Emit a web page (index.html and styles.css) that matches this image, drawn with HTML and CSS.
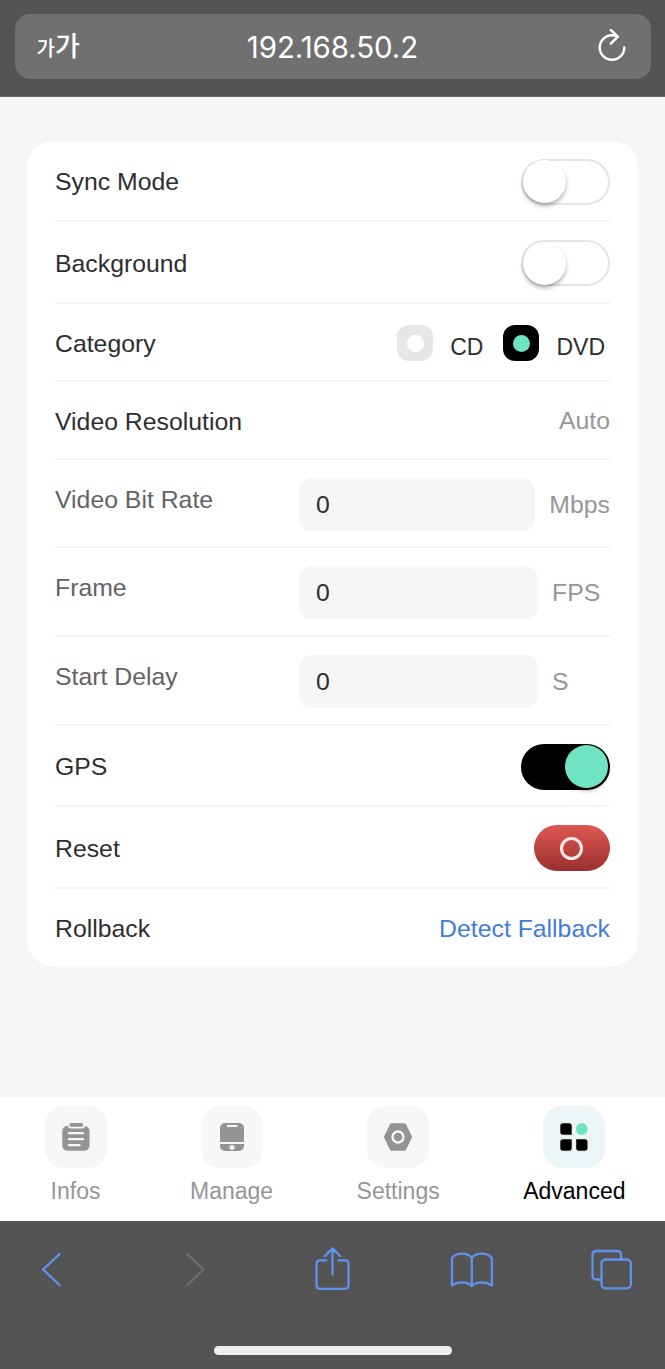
FILE: index.html
```html
<!DOCTYPE html>
<html lang="en">
  <head>
    <meta charset="UTF-8" />
    <meta name="viewport" content="width=device-width, initial-scale=1.0" />
    <title>Advanced</title>
    <link rel="stylesheet" href="styles.css">
  </head>
  <body>
    <header class="browser-top">
      <div class="address-bar">
        <div class="text-size"><span class="small">가</span><span class="large">가</span></div>
        <div class="address">192.168.50.2</div>
        <svg class="reload" width="32" height="36" viewBox="0 0 32 36">
          <path d="M27.3 18.500A12.300 12.300 0 1 1 15 6.200Q18 6.200 20.500 7.200M13.800 1L20.900 7.600L13.800 14.600" />
        </svg>
      </div>
    </header>

    <main class="content">
      <div class="card">
        <div class="row">
          <span class="label">Sync Mode</span>
          <div class="switch"><div class="knob"></div></div>
        </div>
        <div class="row row-bg">
          <span class="label">Background</span>
          <div class="switch"><div class="knob"></div></div>
        </div>
        <div class="row row-text">
          <span class="label">Category</span>
          <div class="radio-group">
            <div class="radio"></div>
            <span class="radio-label">CD</span>
            <div class="radio checked"></div>
            <span class="radio-label">DVD</span>
          </div>
        </div>
        <div class="row row-text">
          <span class="label">Video Resolution</span>
          <span class="value">Auto</span>
        </div>
        <div class="row row-input row-first">
          <span class="label disabled">Video Bit Rate</span>
          <div class="field">
            <div class="input">0</div>
            <span class="unit">Mbps</span>
          </div>
        </div>
        <div class="row row-input">
          <span class="label disabled">Frame</span>
          <div class="field">
            <div class="input">0</div>
            <span class="unit">FPS</span>
          </div>
        </div>
        <div class="row row-input">
          <span class="label disabled">Start Delay</span>
          <div class="field">
            <div class="input">0</div>
            <span class="unit">S</span>
          </div>
        </div>
        <div class="row">
          <span class="label">GPS</span>
          <div class="switch on"><div class="knob"></div></div>
        </div>
        <div class="row row-bg">
          <span class="label">Reset</span>
          <div class="btn-reset"><div class="ring"></div></div>
        </div>
        <div class="row row-last">
          <span class="label">Rollback</span>
          <a class="link">Detect Fallback</a>
        </div>
      </div>
    </main>

    <nav class="tabs">
      <div class="tab">
        <div class="tab-icon">
          <svg width="32" height="32" viewBox="0 0 32 32">
            <rect x="2.3" y="5" width="27.2" height="24.8" rx="5" fill="#949497" />
            <rect x="8" y="0" width="17" height="7.4" rx="3" fill="#f7f7f7" />
            <rect x="9.4" y="2" width="13.6" height="3.7" rx="1.5" fill="#949497" />
            <path d="M9 12.2h14M9 18.2h14M9 24.2h10.500" fill="none" stroke="#f7f7f7" stroke-width="2.3" stroke-linecap="round" />
          </svg>
        </div>
        <span>Infos</span>
      </div>
      <div class="tab">
        <div class="tab-icon">
          <svg width="32" height="32" viewBox="0 0 32 32">
            <rect x="4" y="2" width="24" height="28" rx="5" fill="#949497" />
            <path d="M11 5h10.500M4 22h24" fill="none" stroke="#f7f7f7" stroke-width="2" />
            <circle cx="16" cy="26.500" r="2.500" fill="#f7f7f7" />
          </svg>
        </div>
        <span>Manage</span>
      </div>
      <div class="tab">
        <div class="tab-icon">
          <svg width="32" height="32" viewBox="0 0 32 32">
            <path d="M9.500 4h13L28.300 16L22.500 28h-13L3.700 16z" fill="#949497" stroke="#949497" stroke-width="3.400" stroke-linejoin="round" />
            <circle cx="16" cy="16" r="5.500" fill="none" stroke="#f7f7f7" stroke-width="2.300" />
          </svg>
        </div>
        <span>Settings</span>
      </div>
      <div class="tab active">
        <div class="tab-icon">
          <svg width="32" height="32" viewBox="0 0 32 32">
            <path d="M5 2.300h6a2.700 2.700 0 0 1 2.700 2.700v8.700H5A2.700 2.700 0 0 1 2.300 11V5A2.700 2.700 0 0 1 5 2.300z" />
            <path d="M5 18.300h8.700V27a2.700 2.700 0 0 1-2.700 2.700H5A2.700 2.700 0 0 1 2.300 27v-6A2.700 2.700 0 0 1 5 18.300z" />
            <path d="M18.200 18.300h8.600a2.700 2.700 0 0 1 2.700 2.700v6a2.700 2.700 0 0 1-2.700 2.700h-5.900a2.700 2.700 0 0 1-2.700-2.700z" />
            <circle cx="23.800" cy="8" r="5.900" fill="#6fe3c2" />
          </svg>
        </div>
        <span>Advanced</span>
      </div>
    </nav>

    <footer class="browser-bottom">
      <div class="toolbar">
        <svg viewBox="0 0 48 48"><path d="M32.500 10.200L16 25.500L32.500 41" /></svg>
        <svg class="muted" viewBox="0 0 48 48"><path d="M20.500 10.200L36.500 25.500L20.500 41" /></svg>
        <svg viewBox="0 0 48 48"><path d="M19.500 16.300H13Q9.500 16.300 9.500 19.800V41.300Q9.500 44.800 13 44.800H38Q41.500 44.800 41.500 41.300V19.800Q41.500 16.300 38 16.300H31.500M25.500 30.500V5M17.700 12.200L25.500 4.400L33.300 12.200" /></svg>
        <svg viewBox="0 0 48 48"><path d="M24.800 14Q22 9.700 14.800 9.700Q8 9.700 5 14V41.500Q9 38.300 14.800 38.300Q21 38.300 24.800 42Q28.500 38.300 34.800 38.300Q40.500 38.300 44.800 41.500V14Q41.500 9.700 34.800 9.700Q27.800 9.700 24.800 14zV42" /></svg>
        <svg viewBox="0 0 48 48"><path d="M14 35.500H9.500Q5.500 35.500 5.500 31.500V11Q5.500 7 9.500 7H30Q34 7 34 11V15.500" /><rect x="14.500" y="15.500" width="29.300" height="28.800" rx="4" /></svg>
      </div>
      <div class="home-indicator"></div>
    </footer>
  </body>
</html>
```
FILE: styles.css
```css
* {
  box-sizing: border-box;
}
body {
  margin: 0;
  height: 1369px;
  display: flex;
  flex-direction: column;
  font-family: "Liberation Sans", Arial, sans-serif;
  font-size: 24.8px;
  line-height: 28px;
  color: #2e2e2f;
  background-color: #f6f6f6;
}
.browser-top {
  height: 97px;
  padding: 14px 14.5px 0;
  background-color: #545454;
  border-bottom: 1px solid #6c6c6c;
}
.address-bar {
  height: 65px;
  padding: 0 22px;
  display: grid;
  grid-template-columns: 60px 1fr 60px;
  align-items: center;
  border-radius: 15px;
  background-color: #707070;
  color: white;
}
.text-size {
  display: flex;
  align-items: baseline;
  font-family: "Noto Sans CJK KR", sans-serif;
  font-weight: 500;
}
.text-size .small {
  font-size: 20px;
}
.text-size .large {
  font-size: 27px;
}
.address {
  text-align: center;
  font-family: Inter, sans-serif;
  font-size: 29.5px;
  letter-spacing: -0.1px;
}
.reload {
  justify-self: end;
  fill: none;
  stroke: white;
  stroke-width: 2.4;
  stroke-linecap: round;
  stroke-linejoin: round;
}
.content {
  flex: 1;
  padding: 44px 27px 0;
}
.card {
  padding: 0 28px;
  border-radius: 26px;
  background-color: white;
}
.row {
  height: 81px;
  padding-top: 2px;
  display: flex;
  justify-content: space-between;
  align-items: center;
  border-bottom: 2px solid #f4f4f4;
}
.row-bg {
  height: 82px;
}
.row-text {
  height: 78px;
}
.row-input {
  height: 89px;
  padding-top: 18px;
  align-items: flex-start;
}
.row-first {
  height: 88px;
}
.row-last {
  height: 77px;
  border-bottom: none;
}
.label {
  padding-top: 1px;
}
.row-input .label {
  padding-top: 8px;
}
.disabled {
  color: #636365;
}
.value,
.unit {
  color: #969698;
}
.link {
  color: #437bdb;
}
.switch {
  width: 89px;
  height: 46px;
  display: flex;
  align-items: center;
  border: 2px solid #e5e5e5;
  border-radius: 23px;
  background-color: white;
}
.knob {
  flex: none;
  width: 43px;
  height: 43px;
  border-radius: 50%;
  background-color: white;
  box-shadow: 0 3px 4px rgba(0, 0, 0, 0.3);
}
.switch.on {
  justify-content: flex-end;
  border-color: black;
  background-color: black;
}
.on .knob {
  background-color: #6fe3c2;
}
.radio-group {
  display: flex;
  align-items: center;
  padding-right: 5px;
}
.radio {
  width: 36px;
  height: 36px;
  margin-right: 17px;
  display: flex;
  align-items: center;
  justify-content: center;
  border-radius: 12px;
  background-color: #e7e7e8;
}
.radio::after {
  content: "";
  width: 17px;
  height: 17px;
  border-radius: 50%;
  background-color: white;
}
.radio.checked {
  margin-left: 20px;
  background-color: black;
}
.radio.checked::after {
  background-color: #6fe3c2;
}
.radio-label {
  padding-top: 8px;
  font-size: 23px;
}
.field {
  width: 311px;
  display: flex;
  align-items: center;
  gap: 14px;
}
.input {
  flex: 1;
  height: 53px;
  padding: 0 17px;
  line-height: 54px;
  border-radius: 13px;
  background-color: #f6f6f6;
}
.unit {
  min-width: 58px;
}
.btn-reset {
  width: 76px;
  height: 46px;
  display: flex;
  align-items: center;
  justify-content: center;
  border-radius: 23px;
  background: linear-gradient(#de5753, #98302d);
}
.ring {
  width: 23px;
  height: 23px;
  margin-right: 1px;
  border: 3px solid #fbeae9;
  border-radius: 50%;
}
.tabs {
  height: 124px;
  padding: 9px 39.5px 0 44.5px;
  display: flex;
  justify-content: space-between;
  background-color: white;
}
.tab {
  display: flex;
  flex-direction: column;
  align-items: center;
  gap: 9px;
  font-size: 23px;
  color: #969698;
}
.tab-icon {
  width: 62px;
  height: 62px;
  display: flex;
  align-items: center;
  justify-content: center;
  border-radius: 19px;
  background-color: #f7f7f7;
}
.tab.active {
  color: black;
}
.active .tab-icon {
  background-color: #edf6f6;
}
.browser-bottom {
  height: 148px;
  padding-top: 23px;
  background-color: #545454;
}
.toolbar {
  display: flex;
  justify-content: space-between;
  padding: 0 30px 0 27px;
}
.toolbar svg {
  width: 48px;
  height: 48px;
  fill: none;
  stroke: #5f92ee;
  stroke-width: 2.3;
  stroke-linecap: round;
  stroke-linejoin: round;
}
.toolbar .muted {
  stroke: #6c6c6c;
}
.home-indicator {
  width: 238px;
  height: 9px;
  margin: 54px auto 0;
  border-radius: 5px;
  background-color: #eeeeee;
}
```
